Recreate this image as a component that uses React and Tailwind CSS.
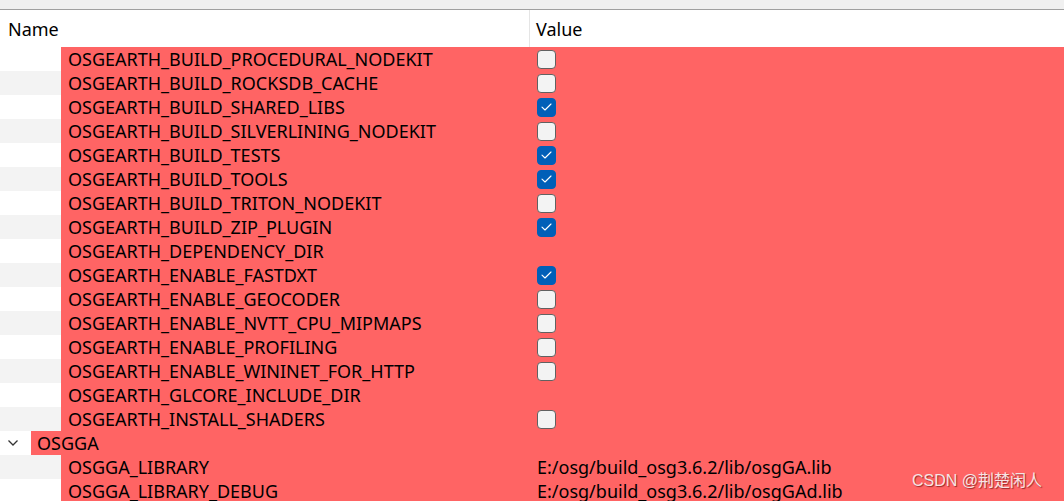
import { useState } from "react";

const entries = [
  { name: "OSGEARTH_BUILD_PROCEDURAL_NODEKIT", type: "bool", on: false },
  { name: "OSGEARTH_BUILD_ROCKSDB_CACHE", type: "bool", on: false },
  { name: "OSGEARTH_BUILD_SHARED_LIBS", type: "bool", on: true },
  { name: "OSGEARTH_BUILD_SILVERLINING_NODEKIT", type: "bool", on: false },
  { name: "OSGEARTH_BUILD_TESTS", type: "bool", on: true },
  { name: "OSGEARTH_BUILD_TOOLS", type: "bool", on: true },
  { name: "OSGEARTH_BUILD_TRITON_NODEKIT", type: "bool", on: false },
  { name: "OSGEARTH_BUILD_ZIP_PLUGIN", type: "bool", on: true },
  { name: "OSGEARTH_DEPENDENCY_DIR", type: "path", value: "" },
  { name: "OSGEARTH_ENABLE_FASTDXT", type: "bool", on: true },
  { name: "OSGEARTH_ENABLE_GEOCODER", type: "bool", on: false },
  { name: "OSGEARTH_ENABLE_NVTT_CPU_MIPMAPS", type: "bool", on: false },
  { name: "OSGEARTH_ENABLE_PROFILING", type: "bool", on: false },
  { name: "OSGEARTH_ENABLE_WININET_FOR_HTTP", type: "bool", on: false },
  { name: "OSGEARTH_GLCORE_INCLUDE_DIR", type: "path", value: "" },
  { name: "OSGEARTH_INSTALL_SHADERS", type: "bool", on: false },
];

const osgga = [
  { name: "OSGGA_LIBRARY", type: "path", value: "E:/osg/build_osg3.6.2/lib/osgGA.lib" },
  { name: "OSGGA_LIBRARY_DEBUG", type: "path", value: "E:/osg/build_osg3.6.2/lib/osgGAd.lib" },
];

const CheckBox = ({ checked, onToggle }) => (
  <button
    onClick={onToggle}
    className={
      checked
        ? "w-[19px] h-[19px] rounded-[4px] bg-[#005fb8] border border-[#005fb8] flex items-center justify-center"
        : "w-[19px] h-[19px] rounded-[4px] bg-[#f3f3f3] border border-[#616161]"
    }
  >
    {checked && (
      <svg width="11" height="8" viewBox="0 0 11 8" fill="none">
        <path d="M1 4.2 L4 7 L10 1" stroke="#fff" strokeWidth="1.1" strokeLinecap="round" strokeLinejoin="round" />
      </svg>
    )}
  </button>
);

const Row = ({ index, indent, children }) => (
  <div className="flex h-6 shrink-0">
    <div className={(index % 2 ? "bg-[#f3f3f3] " : "bg-white ") + indent}></div>
    <div className="flex-1 flex bg-[#ff6464]">{children}</div>
  </div>
);

const App = () => {
  const [rows, setRows] = useState(entries);
  const [open, setOpen] = useState(true);

  const toggle = (i) =>
    setRows(rows.map((r, j) => (j === i ? { ...r, on: !r.on } : r)));

  return (
    <div
      className="relative w-[1064px] h-[501px] overflow-hidden bg-white text-black text-[18px] leading-6 flex flex-col"
      style={{ fontFamily: '"Noto Sans", "Noto Sans CJK SC", sans-serif' }}
    >
      <div className="h-[10px] shrink-0 bg-[#f0f0f0] border-b border-[#a0a0a0]"></div>

      {/* header */}
      <div className="h-[37px] shrink-0 flex items-center">
        <div className="w-[530px] h-full border-r border-[#e5e5e5] pl-2 flex items-center">Name</div>
        <div className="pl-[6px]">Value</div>
      </div>

      {rows.map((r, i) => (
        <Row key={r.name} index={i} indent="w-[61px]">
          <div className="w-[469px] pl-[7px] whitespace-nowrap">{r.name}</div>
          <div className="pl-[7px] flex items-center">
            {r.type === "bool" ? (
              <CheckBox checked={r.on} onToggle={() => toggle(i)} />
            ) : (
              <span className="whitespace-nowrap">{r.value}</span>
            )}
          </div>
        </Row>
      ))}

      {/* OSGGA group */}
      <div className="flex h-6 shrink-0">
        <div className="w-[31px] bg-white flex items-center pl-2" onClick={() => setOpen(!open)}>
          <svg width="10" height="6" viewBox="0 0 10 6" fill="none">
            <path d="M0.5 0.5 L5 5 L9.5 0.5" stroke="#333" strokeWidth="1.3" />
          </svg>
        </div>
        <div className="flex-1 bg-[#ff6464] pl-[6px]">OSGGA</div>
      </div>

      {open &&
        osgga.map((r, i) => (
          <Row key={r.name} index={i + 1} indent="w-[61px]">
            <div className="w-[469px] pl-[7px] whitespace-nowrap">{r.name}</div>
            <div className="pl-[7px] whitespace-nowrap">{r.value}</div>
          </Row>
        ))}

      {/* watermark */}
      <div
        className="absolute left-[912px] top-[469px] text-[16px] text-[#f7e4e4] [text-shadow:1px_1px_1px_rgba(80,0,0,0.6)] whitespace-nowrap"
        style={{ fontFamily: '"Liberation Sans", "Noto Sans CJK SC", sans-serif' }}
      >
        CSDN @荆楚闲人
      </div>
    </div>
  );
};

export default App;
